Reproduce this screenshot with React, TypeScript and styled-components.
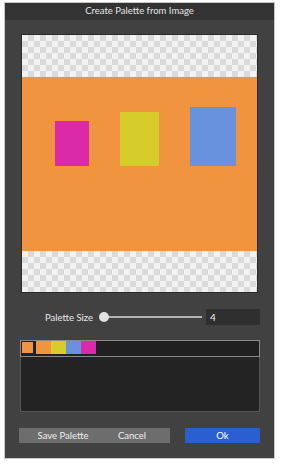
import styled, { createGlobalStyle } from "styled-components";

const GlobalStyle = createGlobalStyle`
  html, body {
    margin: 0;
    padding: 0;
    background: #ffffff;
  }
  body {
    font-family: Lato, "Open Sans", sans-serif;
  }
`;

const palette = ["#f0943f", "#d6cc2c", "#6891de", "#db2aa9"];

export default function App() {
  return (
    <>
      <GlobalStyle />
      <Dialog>
        <TitleBar>Create Palette from Image</TitleBar>
        <Body>
          <ImageFrame>
            <Checker $h={42} />
            <Canvas>
              <Block $bg="#db2aa9" $w={34} $h={45} />
              <Block $bg="#d6cc2c" $w={39} $h={54} />
              <Block $bg="#6891de" $w={46} $h={59} />
            </Canvas>
            <Checker $h={41} />
          </ImageFrame>

          <SizeRow>
            <Label>Palette Size</Label>
            <Slider>
              <Thumb />
            </Slider>
            <NumberBox>4</NumberBox>
          </SizeRow>

          <PaletteList>
            <SwatchRow>
              <Swatch $bg="#f0943f" $selected />
              {palette.map((c) => (
                <Swatch key={c} $bg={c} />
              ))}
            </SwatchRow>
          </PaletteList>

          <Buttons>
            <GreyGroup>
              <SaveButton>Save Palette</SaveButton>
              <CancelButton>Cancel</CancelButton>
            </GreyGroup>
            <OkButton>Ok</OkButton>
          </Buttons>
        </Body>
      </Dialog>
    </>
  );
}

const Dialog = styled.div`
  display: flex;
  flex-direction: column;
  width: 271px;
  height: 457px;
  margin: 2px 0 0 4px;
  background: #414141;
  border: 1px solid #c8c8c8;
  box-sizing: border-box;
`;

const TitleBar = styled.div`
  height: 17px;
  line-height: 16px;
  background: #333333;
  color: #e6e6e6;
  font-size: 9.5px;
  text-align: center;
`;

const Body = styled.div`
  display: flex;
  flex-direction: column;
  padding: 14px 0 0 16px;
`;

const ImageFrame = styled.div`
  display: flex;
  flex-direction: column;
  width: 237px;
  height: 259px;
  border: 1px solid #2a2a2a;
  box-sizing: border-box;
`;

const Checker = styled.div<{ $h: number }>`
  height: ${(p) => p.$h}px;
  background-color: #f2f2f2;
  background-image: linear-gradient(45deg, #dadada 25%, transparent 25%, transparent 75%, #dadada 75%),
    linear-gradient(45deg, #dadada 25%, transparent 25%, transparent 75%, #dadada 75%);
  background-size: 12px 12px;
  background-position: 0 0, 6px 6px;
`;

const Canvas = styled.div`
  flex: 1;
  display: flex;
  align-items: flex-end;
  gap: 31px;
  padding: 0 0 85px 33px;
  background: #f0943f;
`;

const Block = styled.div<{ $bg: string; $w: number; $h: number }>`
  width: ${(p) => p.$w}px;
  height: ${(p) => p.$h}px;
  background: ${(p) => p.$bg};
`;

const SizeRow = styled.div`
  display: flex;
  align-items: center;
  height: 16px;
  margin-top: 16px;
  padding-left: 24px;
`;

const Label = styled.span`
  color: #e8e8e8;
  font-size: 9.5px;
  width: 54px;
`;

const Slider = styled.div`
  position: relative;
  width: 98px;
  height: 2px;
  background: #b4b4b4;
  margin-left: 5px;
`;

const Thumb = styled.div`
  position: absolute;
  left: -5px;
  top: -4px;
  width: 10px;
  height: 10px;
  border-radius: 50%;
  background: #e2e2e2;
`;

const NumberBox = styled.div`
  margin-left: 4px;
  width: 54px;
  height: 16px;
  line-height: 16px;
  background: #2f2f2f;
  color: #eeeeee;
  font-size: 10px;
  padding-left: 4px;
  box-sizing: border-box;
`;

const PaletteList = styled.div`
  margin: 15px 0 0 -1px;
  width: 240px;
  height: 72px;
  background: #232323;
  border: 1px solid #555555;
  box-sizing: border-box;
`;

const SwatchRow = styled.div`
  display: flex;
  height: 15px;
  border: 1px solid #8a8a8a;
  margin: -1px;
  background: #202020;
`;

const Swatch = styled.div<{ $bg: string; $selected?: boolean }>`
  width: ${(p) => (p.$selected ? 13 : 15)}px;
  height: 13px;
  background: ${(p) => p.$bg};
  box-sizing: border-box;
  border: ${(p) => (p.$selected ? "1px solid #222" : "none")};
  margin-right: ${(p) => (p.$selected ? 2 : 0)}px;
`;

const Buttons = styled.div`
  display: flex;
  align-items: center;
  margin-top: 16px;
  margin-left: -2px;
`;

const GreyGroup = styled.div`
  display: flex;
  width: 151px;
  height: 15px;
  background: #6d6d6d;
`;

const TextButton = styled.button`
  border: none;
  background: transparent;
  color: #f0f0f0;
  font-family: Lato, "Open Sans", sans-serif;
  font-size: 9.5px;
  padding: 0;
  line-height: 15px;
`;

const SaveButton = styled(TextButton)`
  width: 88px;
  text-align: center;
`;

const CancelButton = styled(TextButton)`
  flex: 1;
  text-align: left;
  padding-left: 11px;
`;

const OkButton = styled(TextButton)`
  margin-left: 15px;
  width: 75px;
  height: 15px;
  background: #2b5fcf;
  color: #ffffff;
  text-align: center;
`;
